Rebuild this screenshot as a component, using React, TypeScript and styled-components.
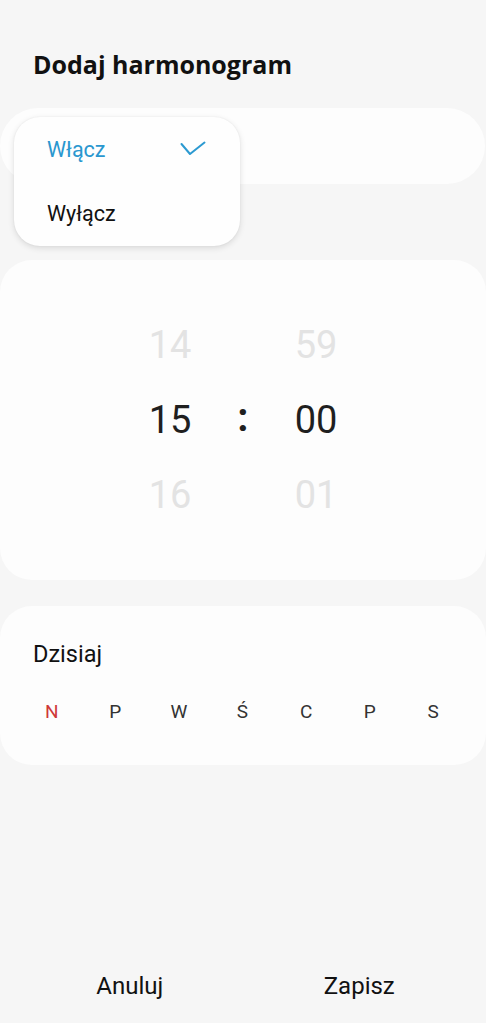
import React, { useState } from 'react';
import styled, { createGlobalStyle } from 'styled-components';

const GlobalStyle = createGlobalStyle`
  html, body {
    margin: 0;
    padding: 0;
    background: #f6f6f6;
  }
  body {
    font-family: Roboto, "Noto Sans", sans-serif;
    color: #111;
  }
`;

const days = ['N', 'P', 'W', 'Ś', 'C', 'P', 'S'];

export default function App() {
  const [enabled, setEnabled] = useState(true);

  return (
    <>
      <GlobalStyle />
      <Page>
        <Title>Dodaj harmonogram</Title>

        <SwitchCard>
          <Menu>
            <MenuItem $active={enabled} onClick={() => setEnabled(true)}>
              Włącz
              {enabled && (
                <svg width="28" height="18" viewBox="0 0 28 18">
                  <path d="M2.5 4 L11 14 L25.5 2.5" fill="none" stroke="#2c9ad1" strokeWidth="2" strokeLinecap="round" strokeLinejoin="round" />
                </svg>
              )}
            </MenuItem>
            <MenuItem $active={!enabled} onClick={() => setEnabled(false)}>
              Wyłącz
            </MenuItem>
          </Menu>
        </SwitchCard>

        <PickerCard>
          <Column>
            <Num $faded>14</Num>
            <Num>15</Num>
            <Num $faded>16</Num>
          </Column>
          <Colon>:</Colon>
          <Column>
            <Num $faded>59</Num>
            <Num>00</Num>
            <Num $faded>01</Num>
          </Column>
        </PickerCard>

        <DaysCard>
          <DayLabel>Dzisiaj</DayLabel>
          <DaysRow>
            {days.map((d, i) => (
              <Day key={i} $sunday={i === 0}>{d}</Day>
            ))}
          </DaysRow>
        </DaysCard>

        <BottomBar>
          <BarButton>Anuluj</BarButton>
          <BarButton>Zapisz</BarButton>
        </BottomBar>
      </Page>
    </>
  );
}

const Page = styled.div`
  display: flex;
  flex-direction: column;
  min-height: 1023px;
  box-sizing: border-box;
  padding-top: 44px;
`;

const Title = styled.div`
  font-family: "Open Sans", Roboto, sans-serif;
  font-size: 25px;
  font-weight: 700;
  color: #111;
  margin-left: 33px;
  line-height: 40px;
  height: 40px;
`;

const Card = styled.div`
  background: #fdfdfd;
  border-radius: 32px;
`;

const SwitchCard = styled(Card)`
  position: relative;
  height: 76px;
  margin-top: 24px;
  margin-right: 1px;
  border-radius: 38px;
`;

const Menu = styled.div`
  position: absolute;
  left: 14px;
  top: 9px;
  width: 226px;
  height: 129px;
  box-sizing: border-box;
  padding: 0 33px;
  background: #fefefe;
  border-radius: 26px;
  box-shadow: 0 2px 6px rgba(0, 0, 0, 0.12), 0 0 2px rgba(0, 0, 0, 0.06);
  display: flex;
  flex-direction: column;
  justify-content: center;
  z-index: 2;
`;

const MenuItem = styled.div<{ $active: boolean }>`
  height: 65px;
  display: flex;
  align-items: center;
  justify-content: space-between;
  font-size: 21.5px;
  color: ${({ $active }) => ($active ? '#2a97cf' : '#111')};
  cursor: pointer;
`;

const PickerCard = styled(Card)`
  margin-top: 76px;
  height: 320px;
  display: flex;
  justify-content: center;
  align-items: center;
`;

const Column = styled.div`
  width: 100px;
  display: flex;
  flex-direction: column;
  align-items: center;
`;

const Num = styled.div<{ $faded?: boolean }>`
  height: 75px;
  line-height: 75px;
  font-size: 38px;
  color: ${({ $faded }) => ($faded ? '#e3e3e3' : '#1f1f1f')};
`;

const Colon = styled.div`
  width: 46px;
  text-align: center;
  font-size: 40px;
  font-weight: 700;
  color: #1f1f1f;
  line-height: 75px;
  margin-top: -6px;
`;

const DaysCard = styled(Card)`
  margin-top: 26px;
  height: 159px;
  box-sizing: border-box;
  padding-top: 32px;
`;

const DayLabel = styled.div`
  margin-left: 33px;
  font-size: 23.5px;
  line-height: 32px;
  color: #111;
`;

const DaysRow = styled.div`
  display: grid;
  grid-template-columns: repeat(7, 1fr);
  padding: 0 21px 0 20px;
  margin-top: 30px;
`;

const Day = styled.div<{ $sunday?: boolean }>`
  text-align: center;
  font-size: 19px;
  line-height: 24px;
  color: ${({ $sunday }) => ($sunday ? '#cf3838' : '#333')};
`;

const BottomBar = styled.div`
  margin-top: auto;
  display: flex;
  padding: 0 12px 0 15px;
  height: 74px;
  align-items: center;
`;

const BarButton = styled.div`
  flex: 1;
  text-align: center;
  font-size: 24px;
  color: #111;
`;
